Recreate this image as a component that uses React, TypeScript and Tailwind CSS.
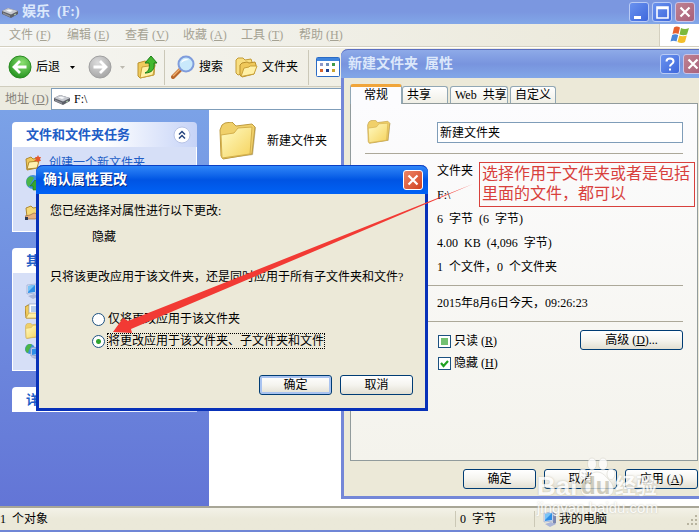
import { useEffect, useRef } from "react";
import type { ReactNode } from "react";

const menus = [
  ["文件", "F"],
  ["编辑", "E"],
  ["查看", "V"],
  ["收藏", "A"],
  ["工具", "T"],
  ["帮助", "H"],
];

const tabs = ["常规", "共享", "Web  共享", "自定义"];

const details = ["文件夹", "F:\\", "6  字节  (6  字节)", "4.00  KB  (4,096  字节)", "1  个文件，0  个文件夹"];

export default function App() {
  return (
    <div className="relative flex h-screen flex-col overflow-hidden border-b-2 border-[#6f86d6] bg-white font-['Liberation_Serif','Noto_Sans_CJK_SC',serif] text-[12px] leading-4 whitespace-pre text-black">
      <Explorer />
      <PropertiesDialog />
      <ConfirmDialog />
      <Annotation />
      <Watermark />
    </div>
  );
}

/* ---------- Explorer window ---------- */

function Explorer() {
  return (
    <>
      <header className="flex h-6 shrink-0 items-center bg-linear-to-b from-[#7b97e0] via-[#7b97e0] to-[#82a7e8] pr-1 pl-0.5">
        <DriveIcon className="h-3 w-4" />
        <h1 className="ml-1 flex-1 text-[14px] font-bold text-[#dce8fb]">娱乐  (F:)</h1>
        <div className="flex gap-[3px]">
          <CaptionButton label="最小化">
            <path d="M5 14h7v3H5z" fill="#fff" />
          </CaptionButton>
          <CaptionButton label="最大化">
            <path d="M5 5h11v11H5z M5 6.5h11" fill="none" stroke="#fff" strokeWidth="1.6" />
          </CaptionButton>
          <CaptionButton label="关闭" tone="muted">
            <path d="M5.5 5.5l9 9m0-9l-9 9" stroke="#fff" strokeWidth="2.2" />
          </CaptionButton>
        </div>
      </header>

      <nav className="flex h-[23px] shrink-0 border-b border-[#d4d0c0] bg-linear-to-r from-[#f4f5f3] to-[#ebe8d8] text-[#a5a293]">
        <div className="flex flex-1 items-center pl-[9px]">
          {menus.map(([name, key]) => (
            <button key={key} className="w-[58px] text-left">
              {name} (<u>{key}</u>)
            </button>
          ))}
        </div>
        <div className="flex w-10 items-center justify-center border-l border-[#d4d0c0] bg-white">
          <WindowsLogo />
        </div>
      </nav>

      <Toolbar />

      <div className="flex h-[23px] shrink-0 items-center bg-[#ecebe0] pl-[5px]">
        <label htmlFor="address" className="w-[46px] text-[#85827a]">
          地址 (<u>D</u>)
        </label>
        <div className="flex h-[22px] flex-1 items-center border border-[#7f9db9] bg-white pl-0.5">
          <DriveIcon className="h-3 w-4" />
          <input id="address" defaultValue="F:\" className="ml-1 min-w-0 flex-1 outline-none" />
        </div>
      </div>

      <div className="flex min-h-0 flex-1">
        <Sidebar />
        <main className="flex flex-1 items-start pt-3 pl-2.5">
          <div className="flex items-center gap-2.5">
            <FolderIcon className="h-[38px] w-[38px]" />
            <span>新建文件夹</span>
          </div>
        </main>
      </div>

      <footer className="flex h-6 shrink-0 items-center border-t-2 border-[#a8a697] bg-linear-to-b from-[#f3f2e8] via-[#ebe9d9] to-[#ebe9d9]">
        <span className="flex-1">1  个对象</span>
        <span className="w-[79px] border-l border-[#cbc8b6] pl-1">0  字节</span>
        <span className="flex w-[165px] items-center gap-px border-l border-[#cbc8b6] pl-[7px]">
          <ComputerIcon />
          <span className="flex-1">我的电脑</span>
          <svg viewBox="0 0 12 12" className="h-3 w-3 self-end" fill="#b8b4a0">
            <path d="M8 0h2v2H8zM8 4h2v2H8zM4 4h2v2H4zM8 8h2v2H8zM4 8h2v2H4zM0 8h2v2H0z" />
          </svg>
        </span>
      </footer>
    </>
  );
}

function Toolbar() {
  return (
    <div className="flex h-10 shrink-0 items-center border-t border-b border-t-white border-b-[#d0cdbd] bg-linear-to-r from-[#f5f5f1] to-[#ebe8d8] pl-2">
      <button className="flex items-center gap-1">
        <ArrowCircle id="back" from="#8be070" to="#1f8f1b" edge="#2a8a22" flip />
        后退
      </button>
      <Caret className="ml-2.5 text-black" />
      <button aria-label="前进" className="ml-[13px]">
        <ArrowCircle id="forward" from="#dcdcdc" to="#a3a3a3" edge="#a0a0a0" />
      </button>
      <Caret className="ml-2 text-[#bdbab0]" />
      <button aria-label="向上" className="ml-3">
        <UpFolderIcon />
      </button>
      <div className="ml-1.5 h-[35px] w-px bg-[#cbc8b8]" />
      <button className="ml-1.5 flex items-center gap-1">
        <SearchIcon />
        搜索
      </button>
      <button className="ml-3 flex items-center gap-1">
        <FoldersIcon />
        文件夹
      </button>
      <div className="ml-2.5 h-[35px] w-px bg-[#cbc8b8]" />
      <button aria-label="查看" className="ml-[7px]">
        <ViewsIcon />
      </button>
    </div>
  );
}

function Sidebar() {
  return (
    <aside className="flex w-[209px] shrink-0 flex-col gap-4 overflow-hidden bg-linear-to-b from-[#7ba2e7] to-[#6375d6] px-3 pt-3">
      <SideGroup title="文件和文件夹任务">
        <div className="flex h-[84px] flex-col gap-1 px-3 pt-2">
          <a href="#new" className="flex items-center gap-2">
            <NewFolderIcon />
            创建一个新文件夹
          </a>
          <PublishIcon />
          <ShareIcon />
        </div>
      </SideGroup>
      <SideGroup title="其它位置">
        <div className="flex h-[97px] flex-col gap-1 px-3 pt-2.5">
          <ComputerIcon />
          <DocumentsIcon />
          <FolderIcon className="h-4 w-4" />
          <NetworkIcon />
        </div>
      </SideGroup>
      <SideGroup title="详细信息" />
    </aside>
  );
}

function SideGroup({ title, children }: { title: string; children?: ReactNode }) {
  return (
    <section>
      <div className="flex h-[25px] items-center justify-between rounded-t-[4px] bg-linear-to-r from-white via-white to-[#c6d3f7] pr-1.5 pl-3.5">
        <h2 className="text-[13px] font-bold text-[#215dc6]">{title}</h2>
        <svg viewBox="0 0 18 18" className="h-[18px] w-[18px]">
          <circle cx="9" cy="9" r="8" fill="#fff" stroke="#b7c3e6" />
          <path d="M6 8.500l3-3 3 3M6 12.500l3-3 3 3" fill="none" stroke="#26457f" strokeWidth="1.5" />
        </svg>
      </div>
      {children && <div className="border border-t-0 border-white bg-[#d6dff7] text-[#215dc6]">{children}</div>}
    </section>
  );
}

/* ---------- Dialogs ---------- */

function PropertiesDialog() {
  return (
    <section className="absolute top-[49px] left-[341px] flex w-[366px] flex-col rounded-t-[7px] border-[3px] border-t-0 border-[#7487d8] bg-[#ece9d8]">
      <div className="-mx-[3px] flex h-[29px] items-center gap-[3px] rounded-t-[7px] border-t border-[#5c6fc0] bg-linear-to-b from-[#8eaae8] via-[#7894de] to-[#82a7e8] pr-1 pl-[7px]">
        <h2 className="flex-1 text-[14px] font-bold text-[#dce8fb]">新建文件夹  属性</h2>
        <CaptionButton label="帮助">
          <path d="M6.500 7.500c0-4 7-4 7 0 0 2.500-3.500 2.500-3.500 5M10 14.500v2" fill="none" stroke="#fff" strokeWidth="2" />
        </CaptionButton>
        <CaptionButton label="关闭" tone="muted">
          <path d="M5.5 5.5l9 9m0-9l-9 9" stroke="#fff" strokeWidth="2.2" />
        </CaptionButton>
      </div>

      <div className="px-1.5 pt-1.5 pb-[7px]">
        <div role="tablist" className="flex items-end gap-0.5">
          {tabs.map((tab, i) => (
            <button
              key={tab}
              role="tab"
              aria-selected={i === 0}
              className={
                i === 0
                  ? "relative -mr-0.5 -mb-px h-5 w-[52px] rounded-t-[3px] border border-t-[3px] border-b-0 border-[#91a7b4] border-t-[#f0a53a] bg-[#fcfcfe] pb-0.5 leading-[14px]"
                  : "h-[17px] rounded-t-[3px] border border-b-0 border-[#91a7b4] bg-linear-to-b from-white to-[#f0efe6] px-1 nth-2:w-[46px] nth-2:text-left nth-3:w-[58px] nth-4:w-[46px]"
              }
            >
              {tab}
            </button>
          ))}
        </div>

        <div className="h-[358px] border border-[#919b9c] bg-linear-to-b from-[#fcfcfe] to-[#f4f3ec] px-3.5 pt-3">
          <div className="flex h-8 items-center pl-0.5">
            <FolderIcon className="h-6 w-6" />
            <input
              aria-label="名称"
              defaultValue="新建文件夹"
              className="ml-[46px] h-[21px] min-w-0 flex-1 border border-[#7f9db9] bg-white px-0.5 outline-none"
            />
          </div>
          <hr className="mt-[5px] border-[#aca899]" />
          <ul className="mt-[5px] mb-1.5 pl-[72px] leading-6">
            {details.map((line) => (
              <li key={line}>{line}</li>
            ))}
          </ul>
          <hr className="border-[#aca899]" />
          <p className="mt-[5px] mb-1.5 pl-[72px] leading-6">2015年8月6日今天，09:26:23</p>
          <hr className="border-[#aca899]" />
          <div className="mt-2 flex items-start justify-between pl-[73px]">
            <div className="flex flex-col">
              <CheckBox name="只读" hotkey="R" mixed />
              <CheckBox name="隐藏" hotkey="H" />
            </div>
            <XpButton className="w-[103px]">
              高级 (<u>D</u>)...
            </XpButton>
          </div>
        </div>

        <div className="mt-2 flex justify-end gap-2">
          <XpButton className="w-[73px]">确定</XpButton>
          <XpButton className="w-[73px]">取消</XpButton>
          <XpButton className="w-[73px]">
            应用 (<u>A</u>)
          </XpButton>
        </div>
      </div>
    </section>
  );
}

function ConfirmDialog() {
  return (
    <section className="absolute top-[165px] left-[36px] flex w-[392px] flex-col rounded-t-[7px] border-[3px] border-t-0 border-[#0831b8] bg-[#ece9d8]">
      <div className="-mx-[3px] flex h-[29px] items-center rounded-t-[7px] border-t border-[#0a3fc4] bg-linear-to-b from-[#2f86f8] via-[#0054e3] to-[#0062f5] pr-[5px] pl-[7px]">
        <h2 className="flex-1 text-[14px] font-bold text-white [text-shadow:1px_1px_#0a2f8a]">确认属性更改</h2>
        <CaptionButton label="关闭" tone="red">
          <path d="M5.500 5.500l9 9m0-9l-9 9" stroke="#fff" strokeWidth="2.200" />
        </CaptionButton>
      </div>
      <div className="pt-[9px] pr-3 pb-[13px] pl-[11px]">
        <p>您已经选择对属性进行以下更改:</p>
        <p className="mt-2.5 pl-[42px]">隐藏</p>
        <p className="mt-6">只将该更改应用于该文件夹，还是同时应用于所有子文件夹和文件?</p>
        <fieldset className="mt-[26px] flex flex-col gap-1.5 pl-[42px]">
          <Radio label="仅将更改应用于该文件夹" />
          <Radio label="将更改应用于该文件夹、子文件夹和文件" active />
        </fieldset>
        <div className="mt-[26px] flex justify-end gap-2">
          <XpButton className="w-[73px] shadow-[inset_0_0_0_2px_#a9c3f0]">确定</XpButton>
          <XpButton className="w-[73px]">取消</XpButton>
        </div>
      </div>
    </section>
  );
}

function CaptionButton({
  label,
  tone = "blue",
  children,
}: {
  label: string;
  tone?: "blue" | "muted" | "red";
  children: ReactNode;
}) {
  const tones = {
    blue: "from-[#6a92ee] to-[#3f67dc] border-[#b9cbf5]",
    muted: "from-[#bf8292] to-[#a8607a] border-[#c9c3e6]",
    red: "from-[#ee8566] to-[#cf3f1c] border-white",
  };
  return (
    <button aria-label={label} className={`h-5 w-5 shrink-0 rounded-[3px] border bg-linear-to-br ${tones[tone]}`}>
      <svg viewBox="1 1 18 18" className="h-full w-full">
        {children}
      </svg>
    </button>
  );
}

function XpButton({ className, children }: { className: string; children: ReactNode }) {
  return (
    <button
      className={`flex h-5 items-center justify-center rounded-[3px] border border-[#003c74] bg-linear-to-b from-white via-[#f5f4ef] to-[#e2dfd2] ${className}`}
    >
      <span>{children}</span>
    </button>
  );
}

function Radio({ label, active }: { label: string; active?: boolean }) {
  return (
    <label className="flex items-center gap-0.5">
      <input
        type="radio"
        name="scope"
        defaultChecked={active}
        className="h-[13px] w-[13px] appearance-none rounded-full border border-[#1c5180] bg-white checked:bg-[radial-gradient(circle,#2fa32f_0_2px,#fff_3px)]"
      />
      <span className={active ? "border border-dotted border-black leading-[14px]" : "pl-px"}>{label}</span>
    </label>
  );
}

function CheckBox({ name, hotkey, mixed = false }: { name: string; hotkey: string; mixed?: boolean }) {
  const ref = useRef<HTMLInputElement>(null);

  useEffect(() => {
    if (ref.current) ref.current.indeterminate = mixed;
  }, [mixed]);

  return (
    <label className="flex h-[22px] items-center gap-[3px]">
      <span className="relative h-[13px] w-[13px]">
        <input
          ref={ref}
          type="checkbox"
          defaultChecked={!mixed}
          className="block h-[13px] w-[13px] appearance-none border border-[#1c5180] bg-white"
        />
        <svg viewBox="0 0 13 13" className="pointer-events-none absolute inset-0">
          {mixed ? (
            <path d="M3 3h7v7H3z" fill="#73c173" />
          ) : (
            <path d="M3 6l2.500 3L10 4" fill="none" stroke="#21a121" strokeWidth="2.200" />
          )}
        </svg>
      </span>
      <span>
        {name} (<u>{hotkey}</u>)
      </span>
    </label>
  );
}

/* ---------- Overlays ---------- */

function Annotation() {
  return (
    <>
      <svg viewBox="0 0 360 149" className="pointer-events-none absolute top-[184px] left-[113px] h-[149px] w-[360px]">
        <path d="M0 148L10 134l5 3L360 0 18 145l1 4z" fill="#f23a34" />
      </svg>
      <p className="absolute top-[162px] left-[479px] w-[216px] border border-[#d8403c] px-0.5 pt-px pb-0.5 text-[16px] leading-5 text-[#d8403c]">
        选择作用于文件夹或者是包括{"\n"}里面的文件，都可以
      </p>
    </>
  );
}

function Watermark() {
  return (
    <div className="pointer-events-none absolute top-[456px] left-[537px] font-['Liberation_Sans','Noto_Sans_CJK_SC',sans-serif] text-white opacity-80 [text-shadow:0_0_2px_#b5b3a6]">
      <svg viewBox="0 0 38 41" className="absolute top-0 left-[41px] h-[41px] w-[38px]" fill="#fff" stroke="#c9c7bb" strokeWidth=".5">
        <ellipse cx="14" cy="8" rx="4.500" ry="6" />
        <ellipse cx="25" cy="8" rx="4.500" ry="6" />
        <ellipse cx="5" cy="18" rx="4" ry="5.500" />
        <ellipse cx="33" cy="18" rx="4" ry="5.500" />
        <path d="M19 16c-6 0-8 5-12 9-5 5-6 15 2 15h20c8 0 8-10 3-15-4-4-7-9-13-9z" />
      </svg>
      <div className="flex items-center pt-4">
        <b className="w-[44px] text-[26px] leading-[28px]">Bai</b>
        <b className="relative w-[34px] text-[24px] leading-[28px] text-[#c9c6b6] [text-shadow:none]">du</b>
        <b className="text-[21px] leading-[28px]">经验</b>
      </div>
      <div className="text-[15px] leading-4">jingyan.baidu.com</div>
    </div>
  );
}

/* ---------- Icons ---------- */

function Caret({ className }: { className: string }) {
  return (
    <svg viewBox="0 0 5 3" className={`h-[3px] w-[5px] ${className}`}>
      <path d="M0 0h5L2.500 3z" fill="currentColor" />
    </svg>
  );
}

function ArrowCircle({
  id,
  from,
  to,
  edge,
  flip,
}: {
  id: string;
  from: string;
  to: string;
  edge: string;
  flip?: boolean;
}) {
  return (
    <svg viewBox="0 0 24 24" className={flip ? "h-6 w-6 -scale-x-100" : "h-6 w-6"}>
      <radialGradient id={id} cx="40%" cy="30%" r="75%">
        <stop offset="0" stopColor={from} />
        <stop offset="1" stopColor={to} />
      </radialGradient>
      <circle cx="12" cy="12" r="11" fill={`url(#${id})`} stroke={edge} />
      <path d="M5.500 12h12M12 6l6 6-6 6" fill="none" stroke="#fff" strokeWidth="2.800" />
    </svg>
  );
}

function DriveIcon({ className }: { className: string }) {
  return (
    <svg viewBox="0 0 16 12" className={className}>
      <path d="M0 5l6-3 10 3v3l-7 4-9-4z" fill="#5d6068" />
      <path d="M0 5l6-3 10 3-7 3.500z" fill="#c6c9d0" />
      <path d="M4 4.500l3-1 4 1.200-3 1.300z" fill="#f7f8fa" />
      <path d="M1 6.500l7 3v1.500l-7-3z" fill="#8d9098" />
      <path d="M12 8.500l2-1v1l-2 1z" fill="#b8d8b0" />
    </svg>
  );
}

function FolderIcon({ className }: { className: string }) {
  return (
    <svg viewBox="0 0 38 38" className={className}>
      <linearGradient id="folder-face" x1="0" y1="0" x2="1" y2="1">
        <stop offset="0" stopColor="#fffbc4" />
        <stop offset="1" stopColor="#f5d25c" />
      </linearGradient>
      <path d="M34 6l3-1-3 28-30 4z" fill="#8b7a3d" opacity=".5" />
      <path d="M1 8l2-5 3-2 7-1 4 4 16-2 3 3-3 27-29 5-2-3z" fill="#f0d06a" stroke="#bf9c40" />
      <path d="M2 13l13-2 4-5 14-1-2 27-28 4z" fill="url(#folder-face)" stroke="#d4b04c" />
    </svg>
  );
}

function FoldersIcon() {
  return (
    <svg viewBox="0 0 23 21" className="h-[21px] w-[23px]">
      <path d="M1 3l2-2 5 0 2 2 6-1 1 3-2 10-12 3-2-2z" fill="#f8de80" stroke="#c39b35" />
      <path d="M5 8l2-2 5-1 2 1 6-1 1 3-2 9-12 3-2-2z" fill="#efc85a" stroke="#b98f2c" />
      <path d="M6 19.500L9 11l5-1 1-1 7 0-3 8z" fill="#fff0a6" stroke="#c9a13a" />
    </svg>
  );
}

function UpFolderIcon() {
  return (
    <svg viewBox="0 0 21 24" className="h-6 w-[21px]">
      <path d="M1 8l7-2 2 1 8 0-1 13-14 3-2-2z" fill="#f0cb5d" stroke="#ba922f" />
      <path d="M3 23L5 12l13-2-2 10z" fill="#fff0a6" stroke="#c9a13a" />
      <path d="M8 18c4-2 5-5 4-10H8l6-7 6 7h-3c1 6-2 10-9 10z" fill="#43b82f" stroke="#1c7d18" />
    </svg>
  );
}

function SearchIcon() {
  return (
    <svg viewBox="0 0 24 24" className="h-6 w-6">
      <path d="M10 14l-8 8" stroke="#b8672c" strokeWidth="4" strokeLinecap="round" />
      <path d="M9 14l-7 7" stroke="#f0b06e" strokeWidth="1.500" />
      <circle cx="15" cy="9" r="7.500" fill="#c9e9fb" stroke="#7f9cdc" strokeWidth="2" />
      <path d="M10 8c1-4 5-5 8-3-3 0-6 1-8 3z" fill="#fff" />
    </svg>
  );
}

function ViewsIcon() {
  return (
    <svg viewBox="0 0 24 20" className="h-5 w-6">
      <rect x=".5" y=".5" width="23" height="19" rx="1" fill="#fff" stroke="#2b6bc4" />
      <path d="M1 1h22v3H1z" fill="#3f85dd" />
      <path d="M4 6h3v3H4z" fill="#8f98c8" />
      <path d="M10 6h3v3h-3z" fill="#6f8fbb" />
      <path d="M16 6h3v3h-3z" fill="#3f9a49" />
      <path d="M4 12h3v3H4z" fill="#d8622e" />
      <path d="M10 12h3v3h-3z" fill="#1c3f8f" />
      <path d="M16 12h3v3h-3z" fill="#c9a531" />
    </svg>
  );
}

function WindowsLogo() {
  return (
    <svg viewBox="0 0 20 18" className="h-[18px] w-5">
      <path d="M4 1.500c2-1.500 4-1 6 0L8.500 8c-2-1-4-1-6 0z" fill="#e8602c" />
      <path d="M11 2c2 1 5 1.500 8 0l-2 6.500c-2 1-5 1-7.500 0z" fill="#7cb93c" />
      <path d="M2.200 9c2-1 4-1 6 0l-1.700 6.500c-2-1.200-4-1-6 0z" fill="#4a86d8" />
      <path d="M9.300 9.500c2 1 5 1 7.500 0L15 16c-2 1.500-5 1.200-7.500 0z" fill="#f3bf2b" />
    </svg>
  );
}

function ComputerIcon() {
  return (
    <svg viewBox="0 0 16 16" className="h-4 w-4 shrink-0">
      <path d="M11 1l3 2v9l-3 2z" fill="#7b87b0" />
      <path d="M2 2l9-1v9l-9 1z" fill="#dfe6f5" stroke="#8fa0cc" strokeWidth=".6" />
      <path d="M3 3l7-1v7l-7 1z" fill="#2f8fe6" />
      <path d="M3 3l7-1-6 6-1 1z" fill="#79c4f6" />
      <path d="M3 13l6-2 5 2-6 3z" fill="#aab5d8" />
    </svg>
  );
}

function NewFolderIcon() {
  return (
    <svg viewBox="0 0 16 16" className="h-4 w-4 shrink-0">
      <path d="M1 4l5-2 2 2 5-1-1 10-10 2z" fill="#efc85a" stroke="#b08a30" />
      <path d="M2 14L4 7l10-1-2 7z" fill="#fff0b0" stroke="#b08a30" />
      <path d="M13 0l1 2 2 0-1 2 1 2-2 0-1 2-1-2-3 0 2-2-1-2h2z" fill="#e5572b" />
    </svg>
  );
}

function PublishIcon() {
  return (
    <svg viewBox="0 0 16 16" className="h-4 w-4 shrink-0">
      <circle cx="8" cy="7" r="7" fill="#3f8fdb" />
      <path d="M2 4c3-4 6-2 7-1L6 8 4 12C1 10 1 6 2 4z" fill="#4cb548" />
      <path d="M10 5l6 6h-3v4H8v-4H5z" fill="#37a52d" stroke="#1c7a1a" strokeWidth=".6" />
    </svg>
  );
}

function ShareIcon() {
  return (
    <svg viewBox="0 0 16 16" className="mt-2.5 h-4 w-4 shrink-0">
      <path d="M1 3l5-2 2 2 7-1-1 9-12 1z" fill="#f5d877" stroke="#b08a30" />
      <path d="M0 11l5-1 4-2 4 1 3 3-6 2H0z" fill="#e8b07e" stroke="#8a5a34" strokeWidth=".6" />
      <path d="M0 12h3v3H0z" fill="#2e3a55" />
    </svg>
  );
}

function DocumentsIcon() {
  return (
    <svg viewBox="0 0 16 16" className="h-4 w-4 shrink-0">
      <path d="M0 4l3-2h12v11l-3 2H1z" fill="#f0cb5d" stroke="#b08a30" />
      <path d="M4 1h9v10H4z" fill="#fff" stroke="#7f95b8" strokeWidth=".6" />
      <path d="M6 4h6M6 6h6M6 8h6" stroke="#6f9bd8" />
      <path d="M1 15l3-5h11l-3 5z" fill="#fff0a6" stroke="#c9a13a" strokeWidth=".6" />
    </svg>
  );
}

function NetworkIcon() {
  return (
    <svg viewBox="0 0 16 16" className="h-4 w-4 shrink-0">
      <circle cx="5" cy="6" r="5" fill="#3f8fdb" />
      <path d="M1 4c2-4 5-3 6-2L4 7l-1 3C0 9 0 6 1 4z" fill="#4cb548" />
      <path d="M6 5l8-1v8l-8 1z" fill="#dfe6f5" stroke="#8fa0cc" />
      <path d="M7 6l6-1v6l-6 1z" fill="#2f8fe6" />
      <path d="M6 14l5-1 4 1-5 2z" fill="#aab5d8" />
    </svg>
  );
}
